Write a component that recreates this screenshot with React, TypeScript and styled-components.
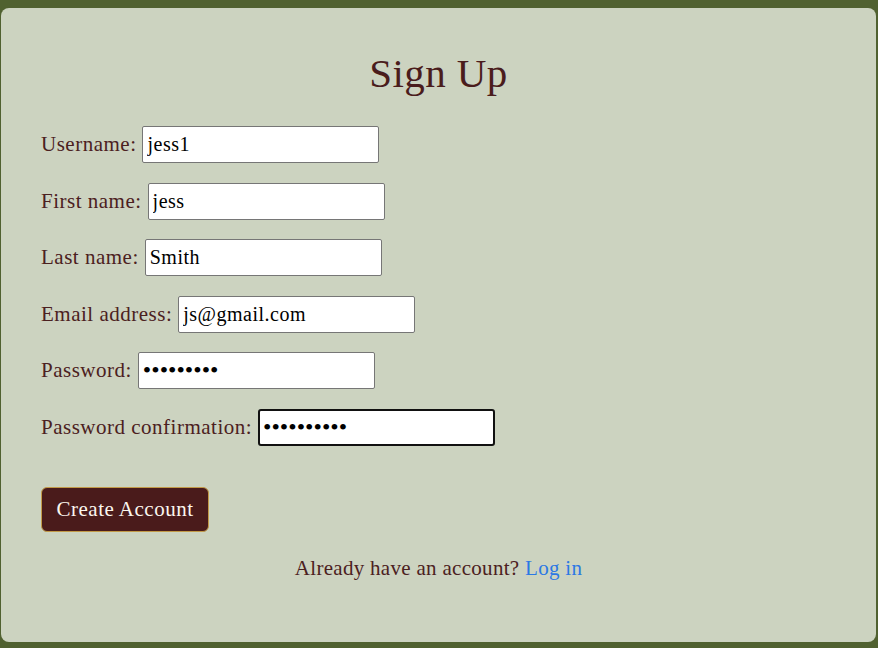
import React from "react";
import styled, { createGlobalStyle } from "styled-components";

const GlobalStyle = createGlobalStyle`
  html, body {
    margin: 0;
    padding: 0;
    background: #506130;
  }
  * { box-sizing: border-box; }
`;

const Page = styled.div`
  padding: 8px 2px 6px 1px;
  font-family: "Liberation Serif", "Times New Roman", serif;
`;

const Card = styled.div`
  background: #ccd3c0;
  border-radius: 8px;
  min-height: 634px;
  padding: 41px 40px 40px 40px;
  display: flex;
  flex-direction: column;
  color: #4a1c1c;
`;

const Title = styled.h1`
  margin: 0 0 29px 0;
  font-size: 41px;
  line-height: 48px;
  font-weight: 400;
  letter-spacing: 0.4px;
  text-align: center;
  color: #4a1c1c;
`;

const Form = styled.form`
  display: flex;
  flex-direction: column;
  gap: 19.5px;
`;

const Row = styled.div`
  display: flex;
  align-items: center;
  height: 37px;
  font-size: 21px;
  letter-spacing: 0.5px;
  color: #4b2020;
`;

const Label = styled.label`
  margin-right: 6px;
  white-space: nowrap;
`;

const Input = styled.input<{ $focused?: boolean; $secret?: boolean }>`
  width: 237px;
  height: 37px;
  background: #fff;
  border: ${(p) => (p.$focused ? "2px solid #111" : "1px solid #767676")};
  border-radius: ${(p) => (p.$focused ? "3px" : "2px")};
  padding: 0 ${(p) => (p.$focused ? "3px" : "4px")};
  font-family: "Liberation Serif", "Times New Roman", serif;
  font-size: ${(p) => (p.$secret ? "24px" : "20px")};
  letter-spacing: ${(p) => (p.$secret ? "0" : "0.5px")};
  color: #000;
  outline: none;
`;

const ButtonRow = styled.div`
  margin-top: 41.5px;
  display: flex;
`;

const Button = styled.button`
  height: 45px;
  width: 168px;
  background: #4a1b1b;
  color: #fbf6ee;
  border: 1px solid #c29a48;
  border-radius: 6px;
  font-family: "Liberation Serif", "Times New Roman", serif;
  font-size: 21px;
  letter-spacing: 0.5px;
  padding: 0;
`;

const Footer = styled.p`
  margin: 22px 0 0 0;
  text-align: center;
  font-size: 21px;
  letter-spacing: 0.3px;
  line-height: 28px;
  color: #4b2020;
`;

const Link = styled.a`
  color: #2b78e4;
  text-decoration: none;
`;

const fields = [
  { label: "Username:", type: "text", value: "jess1" },
  { label: "First name:", type: "text", value: "jess" },
  { label: "Last name:", type: "text", value: "Smith" },
  { label: "Email address:", type: "text", value: "js@gmail.com" },
  { label: "Password:", type: "password", value: "123456789" },
  { label: "Password confirmation:", type: "password", value: "1234567890", focused: true },
];

export default function App() {
  return (
    <Page>
      <GlobalStyle />
      <Card>
        <Title>Sign Up</Title>
        <Form onSubmit={(e) => e.preventDefault()}>
          {fields.map((f) => (
            <Row key={f.label}>
              <Label>{f.label}</Label>
              <Input
                type={f.type}
                defaultValue={f.value}
                $focused={f.focused}
                $secret={f.type === "password"}
              />
            </Row>
          ))}
        </Form>
        <ButtonRow>
          <Button type="button">Create Account</Button>
        </ButtonRow>
        <Footer>
          Already have an account? <Link href="#">Log in</Link>
        </Footer>
      </Card>
    </Page>
  );
}
